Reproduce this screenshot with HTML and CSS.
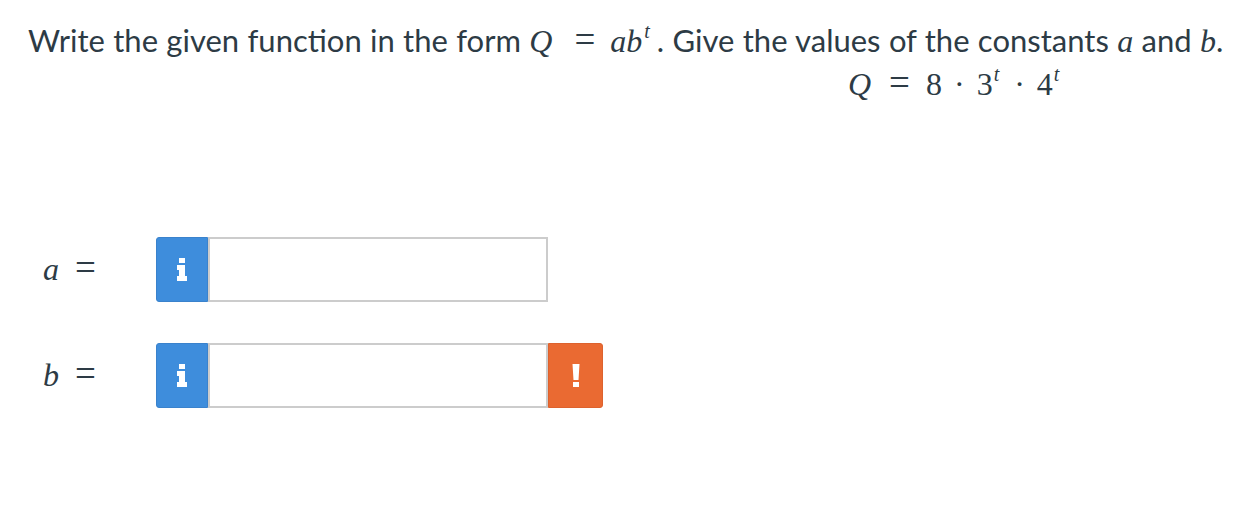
FILE: index.html
```html
<!DOCTYPE html>
<html>
<head>
<meta charset="utf-8">
<link rel="stylesheet" href="styles.css">
</head>
<body>
<div class="page">
  <p class="prompt">Write the given function in the form <span class="m"><i>Q</i><span class="eq">=</span><i>ab</i><sup class="gap"><i>t</i></sup></span>. Give the values of the constants <span class="m"><i>a</i></span> and <span class="m"><i>b</i></span>.</p>
  <div class="display"><span class="m"><i>Q</i><span class="eq">=</span>8<span class="dot">·</span>3<sup><i>t</i></sup><span class="dot">·</span>4<sup><i>t</i></sup></span></div>

  <div class="rows">
    <div class="row">
      <div class="label m"><i>a</i><span class="eq">=</span></div>
      <div class="group">
        <div class="btn info">
          <svg width="12" height="24" viewBox="0 0 12 24"><rect x="3" y="0" width="6" height="5" fill="#fff"/><path d="M1 7h8v11h2v5H1v-5h2v-6H1z" fill="#fff"/></svg>
        </div>
        <div class="field"></div>
      </div>
    </div>
    <div class="row">
      <div class="label m"><i>b</i><span class="eq">=</span></div>
      <div class="group">
        <div class="btn info">
          <svg width="12" height="24" viewBox="0 0 12 24"><rect x="3" y="0" width="6" height="5" fill="#fff"/><path d="M1 7h8v11h2v5H1v-5h2v-6H1z" fill="#fff"/></svg>
        </div>
        <div class="field"></div>
        <div class="btn warn">
          <svg width="8" height="24" viewBox="0 0 8 24"><path d="M0.5 0h7l-1 16h-5z" fill="#fff"/><rect x="1" y="18" width="6" height="5" fill="#fff"/></svg>
        </div>
      </div>
    </div>
  </div>
</div>
</body>
</html>
```
FILE: styles.css
```css
html, body {
  margin: 0;
  padding: 0;
  background: #fff;
}
.page {
  padding: 22px 0 0 28px;
  font-family: Lato, "Open Sans", sans-serif;
  color: #2d3b45;
}
.prompt {
  margin: 0;
  font-size: 31px;
  line-height: 36px;
  white-space: nowrap;
  word-spacing: 0.4px;
}
.m {
  font-family: "Liberation Serif", "Times New Roman", serif;
  font-size: 32px;
  color: #2d3b45;
  word-spacing: 0;
}
.m i {
  font-style: italic;
}
.m sup {
  font-size: 20px;
  vertical-align: 14px;
  line-height: 0;
  margin-left: 2px;
}
.m sup.gap {
  margin-right: 7px;
}
.eq {
  font-size: 37px;
  line-height: 0;
  margin: 0 15px 0 22px;
}
.display .eq {
  margin: 0 16px 0 18px;
}
.dot {
  margin: 0 12px;
}
.display {
  margin: 7px 0 0 820px;
  line-height: 36px;
}
.display sup {
  margin-left: 1px;
  margin-right: 3px;
}
.rows {
  margin-top: 130px;
  display: flex;
  flex-direction: column;
  gap: 41px;
}
.row {
  display: flex;
  align-items: center;
  height: 65px;
}
.label {
  width: 128px;
  padding-left: 15px;
  box-sizing: border-box;
  font-size: 32px;
}
.label .eq {
  margin: 0 0 0 16px;
}
.group {
  display: flex;
  height: 65px;
}
.btn {
  display: flex;
  align-items: center;
  justify-content: center;
  box-sizing: border-box;
}
.info {
  width: 52px;
  background: #3e8ddc;
  border: 1px solid #3a82cc;
  border-radius: 3px 0 0 3px;
}
.warn {
  width: 55px;
  background: #ea6a32;
  border: 1px solid #dd622e;
  border-radius: 0 3px 3px 0;
}
.field {
  width: 340px;
  box-sizing: border-box;
  border: 2px solid #cccccc;
  background: #fff;
}
```
